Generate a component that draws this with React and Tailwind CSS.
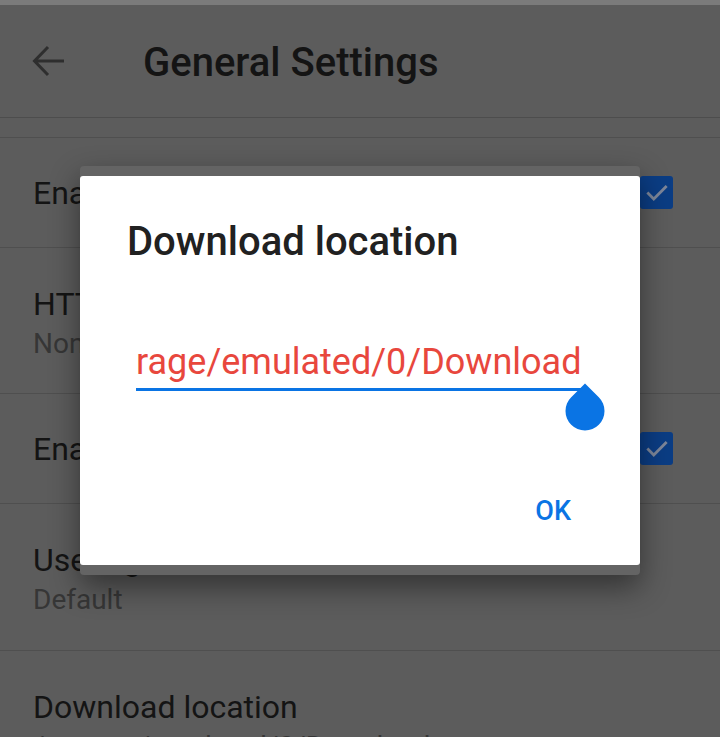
import React from "react";

function Checkbox() {
  return (
    <div className="w-[33px] h-[33px] rounded-[3px] bg-[#0b3d84] flex items-center justify-center">
      <svg width="26" height="26" viewBox="0 0 24 24" fill="none">
        <path d="M4 12.5l5 5L20 6.5" stroke="#7d8699" strokeWidth="2.6" strokeLinecap="square" />
      </svg>
    </div>
  );
}

function Row({ title, sub, check, h }) {
  if (check) {
    return (
      <div className={`${h} border-b border-[#4f4f4f] flex items-center justify-between pl-[33px] pr-[47px]`}>
        <div className="text-[32px] leading-[38px] text-[#141414]">{title}</div>
        <Checkbox />
      </div>
    );
  }
  return (
    <div className={`${h} border-b border-[#4f4f4f] pl-[33px] pt-[37px]`}>
      <div className="text-[32px] leading-[38px] text-[#141414] whitespace-nowrap">{title}</div>
      <div className="mt-[4px] text-[28px] leading-[34px] text-[#363636] whitespace-nowrap">{sub}</div>
    </div>
  );
}

export default function App() {
  return (
    <div
      className="relative w-[720px] h-[737px] overflow-hidden bg-[#5c5c5c]"
      style={{ fontFamily: "Roboto, 'Noto Sans', sans-serif" }}
    >
      <div className="h-[5px] bg-[#7b7b7b]" />
      <div className="h-[113px] border-b border-[#4d4d4d] flex items-center">
        <svg className="ml-[31px]" width="36" height="36" viewBox="0 0 36 36" fill="none">
          <path d="M33 18H4M17 4L3.5 18L17 32" stroke="#2e2e2e" strokeWidth="3" />
        </svg>
        <div className="ml-[76px] mt-[3px] text-[40px] leading-[48px] font-medium text-[#141414]">General Settings</div>
      </div>
      <div className="h-[20px] border-b border-[#4f4f4f]" />
      <Row title="Enable notifications" check h="h-[110px]" />
      <Row title="HTTP proxy" sub="None" h="h-[146px]" />
      <Row title="Enable logging" check h="h-[110px]" />
      <Row title="User agent" sub="Default" h="h-[147px]" />
      <Row title="Download location" sub="/storage/emulated/0/Download" h="h-[147px]" />

      {/* Dialog */}
      <div className="absolute left-[80px] top-[166px] w-[560px] rounded-[4px] bg-[#646464] py-[10px] shadow-[0_12px_30px_rgba(0,0,0,0.45)]">
        <div className="bg-white rounded-[3px] h-[389px] flex flex-col">
          <div className="pl-[47px] pt-[42px] text-[40px] leading-[48px] font-medium text-[#212121]">
            Download location
          </div>
          <div className="relative ml-[56px] mr-[55px] mt-[75px]">
            <div className="overflow-hidden whitespace-nowrap text-[36px] leading-[42px] text-[#e8473d]">
              rage/emulated/0/Download
            </div>
            <div className="mt-[5px] h-[3px] bg-[#0a74e4]" />
            <svg
              className="absolute right-[-20px] top-[42px]"
              width="40"
              height="48"
              viewBox="0 0 40 48"
            >
              <path d="M20 0.5 L33.8 14.2 A19.5 19.5 0 1 1 6.2 14.2 Z" fill="#0a74e4" />
            </svg>
          </div>
          <div className="flex justify-end pr-[69px] mt-auto mb-[38px]">
            <div className="text-[27px] leading-[32px] font-medium text-[#0a74e4]">OK</div>
          </div>
        </div>
      </div>
    </div>
  );
}
